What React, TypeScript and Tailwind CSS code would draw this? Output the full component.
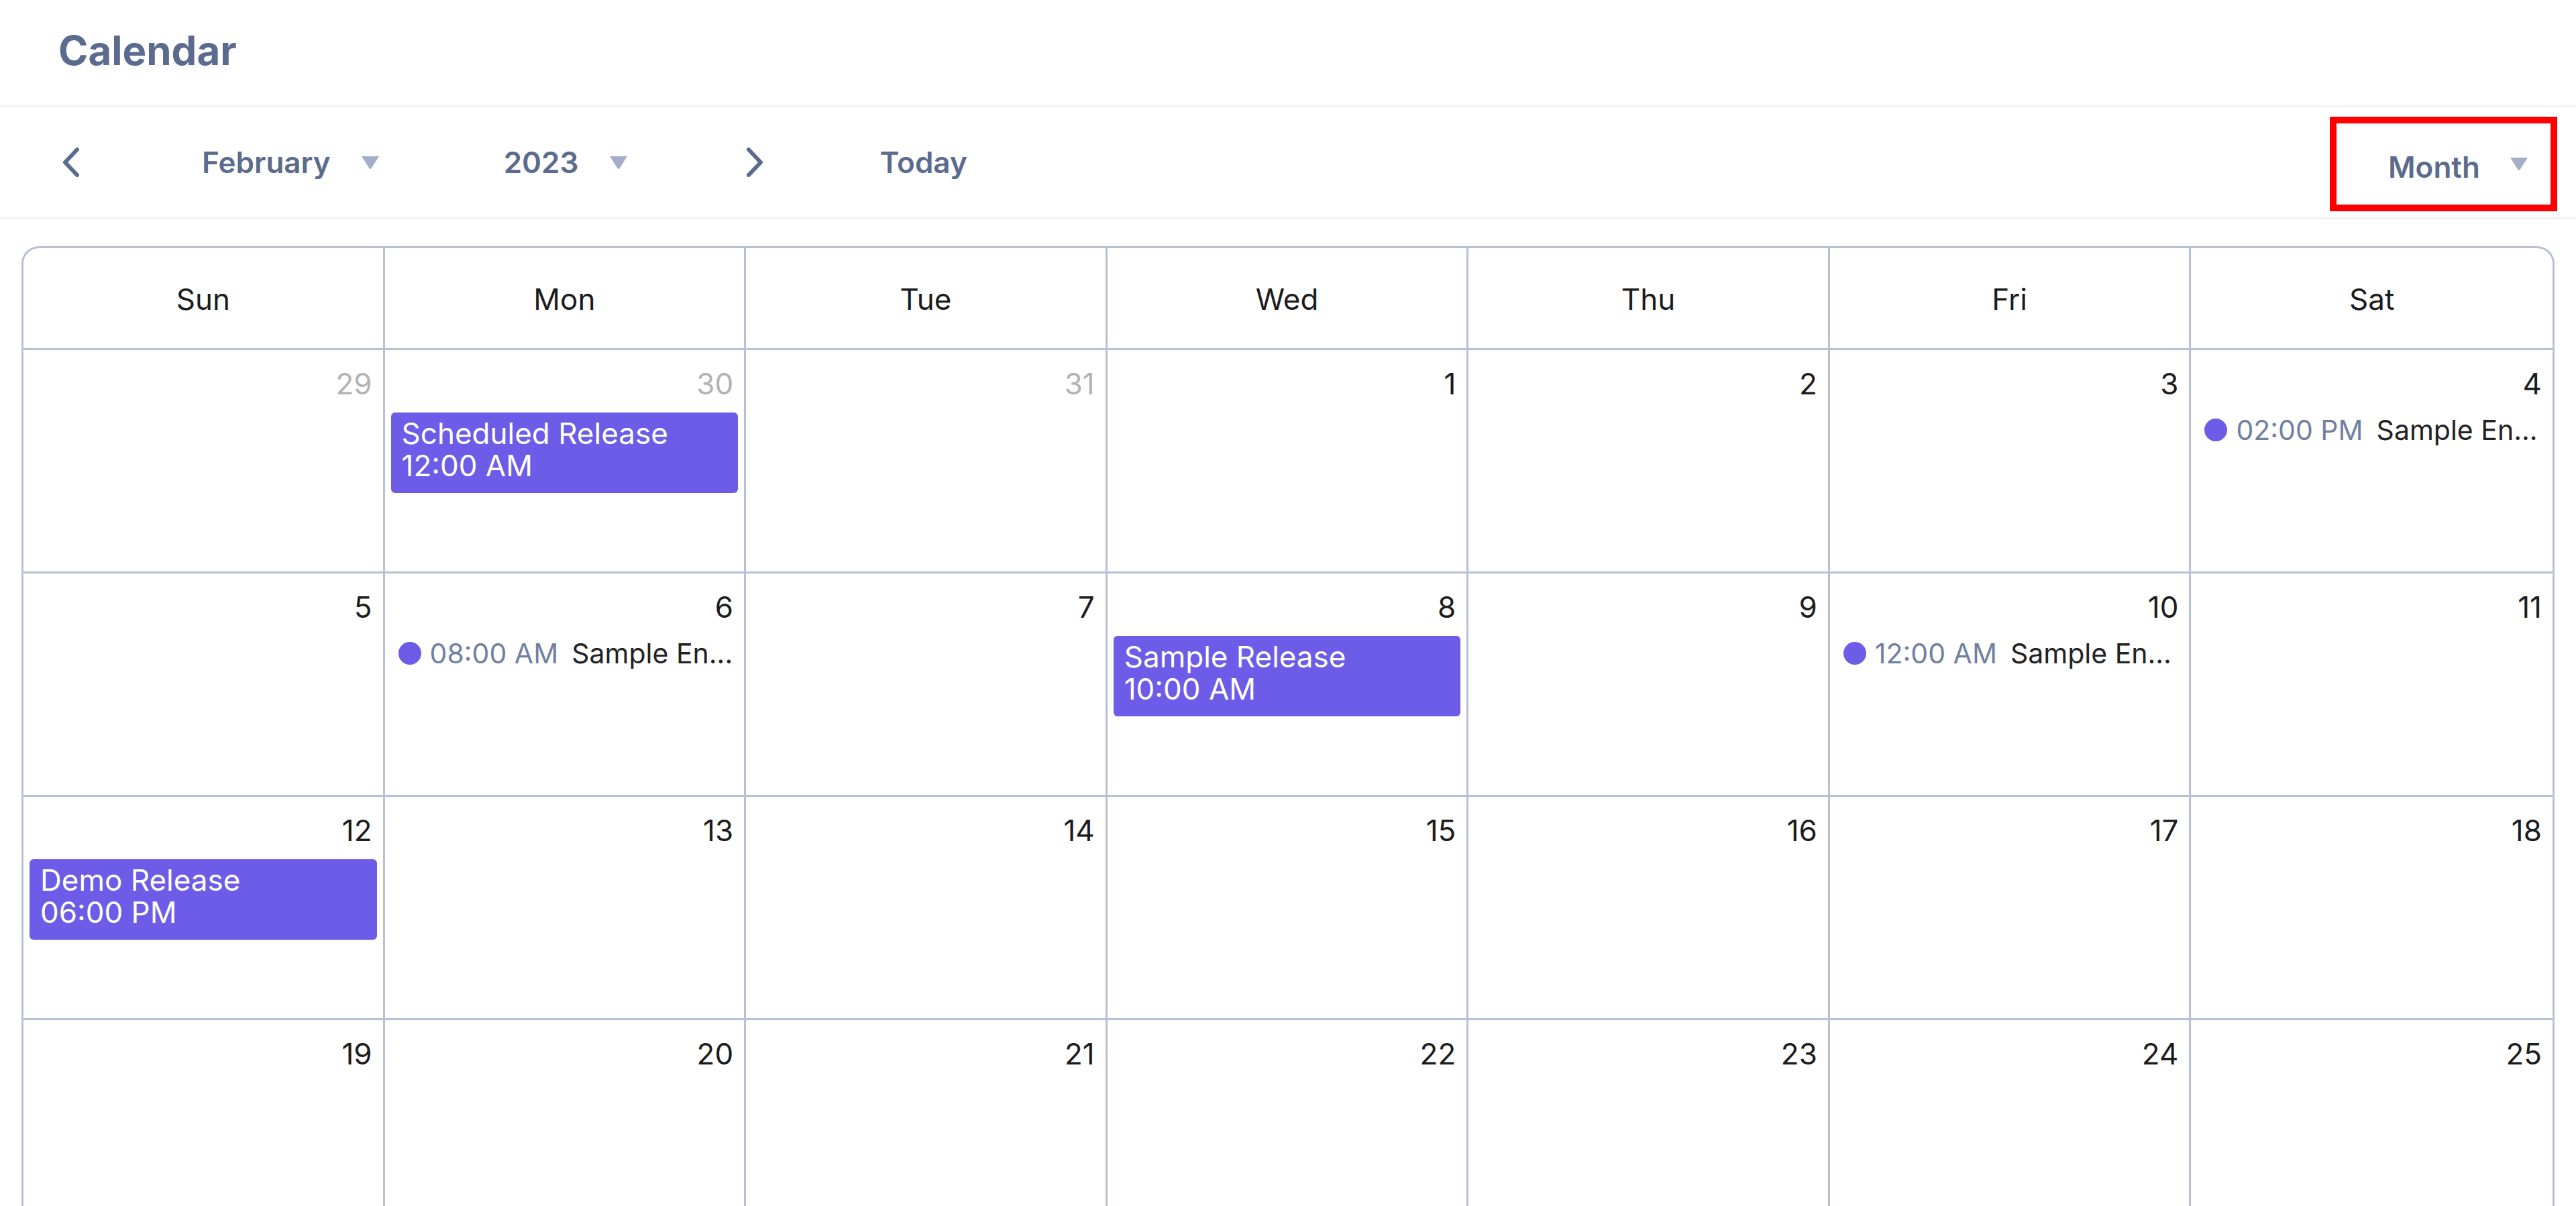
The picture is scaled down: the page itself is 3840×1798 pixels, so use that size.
import React from "react";

type Ev =
  | { kind: "block"; title: string; time: string }
  | { kind: "dot"; title: string; time: string };

interface Day {
  n: number;
  muted?: boolean;
  events?: Ev[];
}

const weekdays = ["Sun", "Mon", "Tue", "Wed", "Thu", "Fri", "Sat"];

// Only the weeks that fit above the fold are rendered
const weeks: Day[][] = [
  [
    { n: 29, muted: true },
    { n: 30, muted: true, events: [{ kind: "block", title: "Scheduled Release", time: "12:00 AM" }] },
    { n: 31, muted: true },
    { n: 1 },
    { n: 2 },
    { n: 3 },
    { n: 4, events: [{ kind: "dot", title: "Sample En...", time: "02:00 PM" }] },
  ],
  [
    { n: 5 },
    { n: 6, events: [{ kind: "dot", title: "Sample En...", time: "08:00 AM" }] },
    { n: 7 },
    { n: 8, events: [{ kind: "block", title: "Sample Release", time: "10:00 AM" }] },
    { n: 9 },
    { n: 10, events: [{ kind: "dot", title: "Sample En...", time: "12:00 AM" }] },
    { n: 11 },
  ],
  [
    { n: 12, events: [{ kind: "block", title: "Demo Release", time: "06:00 PM" }] },
    { n: 13 },
    { n: 14 },
    { n: 15 },
    { n: 16 },
    { n: 17 },
    { n: 18 },
  ],
  [
    { n: 19 },
    { n: 20 },
    { n: 21 },
    { n: 22 },
    { n: 23 },
    { n: 24 },
    { n: 25 },
  ],
];

const Chevron = ({ dir }: { dir: "left" | "right" }) => (
  <svg width="28" height="46" viewBox="0 0 28 46" fill="none" className="shrink-0">
    <path
      d={dir === "left" ? "M23 4 L5 23 L23 42" : "M5 4 L23 23 L5 42"}
      stroke="#5b6b8e"
      strokeWidth="6"
      strokeLinecap="round"
      strokeLinejoin="round"
    />
  </svg>
);

const Caret = () => (
  <svg width="30" height="22" viewBox="0 0 30 22" className="shrink-0">
    <path d="M2 2 H28 L16.5 20 Q15 22 13.5 20 Z" fill="#a4aec6" />
  </svg>
);

const EventItem = ({ ev }: { ev: Ev }) => {
  if (ev.kind === "block") {
    return (
      <div className="mx-[9px] mt-[16px] h-[120px] rounded-[6px] bg-[#6c5ce7] px-[16px] pt-[7px] text-[44px] leading-[48px] text-white">
        <div>{ev.title}</div>
        <div>{ev.time}</div>
      </div>
    );
  }
  return (
    <div className="mt-[20px] flex items-center whitespace-nowrap pl-[20px] text-[41px] leading-[44px]">
      <span className="h-[34px] w-[34px] shrink-0 rounded-full bg-[#6c5ce7]" />
      <span className="ml-[13px] shrink-0 text-[#7080a0]">{ev.time}</span>
      <span className="ml-[20px] shrink-0 text-[#222222]">{ev.title}</span>
    </div>
  );
};

export default function App() {
  return (
    <div className="h-screen overflow-hidden bg-white font-[family-name:Inter,sans-serif]">
      <div className="flex h-[160px] items-center border-b-[3px] border-[#eef1f7] pb-[8px] pl-[87px]">
        <h1 className="text-[60px] font-bold leading-none text-[#5b6b8e]">Calendar</h1>
      </div>

      <div className="flex h-[167px] items-center border-b-[3px] border-[#eef1f7] pl-[92px] pr-[28px] text-[44px] font-semibold text-[#5b6b8e]">
        <Chevron dir="left" />
        <div className="ml-[181px] flex items-center">
          <span>February</span>
          <span className="ml-[44px]">
            <Caret />
          </span>
        </div>
        <div className="ml-[184px] flex items-center">
          <span>2023</span>
          <span className="ml-[44px]">
            <Caret />
          </span>
        </div>
        <span className="ml-[174px]">
          <Chevron dir="right" />
        </span>
        <span className="ml-[173px]">Today</span>

        <div className="ml-auto mt-[4px] flex h-[141px] w-[339px] items-center border-[10px] border-[#ff0000] pl-[77px] pr-[32px]">
          <span className="mt-[10px]">Month</span>
          <span className="ml-auto">
            <Caret />
          </span>
        </div>
      </div>

      <div className="mx-[32px] mt-[40px] overflow-hidden rounded-t-[26px] border-[3px] border-b-0 border-[#b7c1d5]">
        <div className="grid grid-cols-7">
          {weekdays.map((d, i) => (
            <div
              key={d}
              className={`flex h-[152px] items-center justify-center border-b-[3px] border-[#b7c1d5] pt-[2px] text-[44px] text-[#1c1c1c] ${
                i < 6 ? "border-r-[3px]" : ""
              }`}
            >
              {d}
            </div>
          ))}

          {weeks.flat().map((day, i) => (
            <div
              key={i}
              className={`flex h-[333px] min-w-0 flex-col overflow-hidden border-b-[3px] border-[#b7c1d5] ${
                i % 7 < 6 ? "border-r-[3px]" : ""
              }`}
            >
              <div
                className={`pr-[16px] pt-[24px] text-right text-[44px] leading-[53px] ${
                  day.muted ? "text-[#b3b3b3]" : "text-[#1c1c1c]"
                }`}
              >
                {day.n}
              </div>
              {day.events?.map((ev, k) => (
                <EventItem key={k} ev={ev} />
              ))}
            </div>
          ))}
        </div>
      </div>
    </div>
  );
}
